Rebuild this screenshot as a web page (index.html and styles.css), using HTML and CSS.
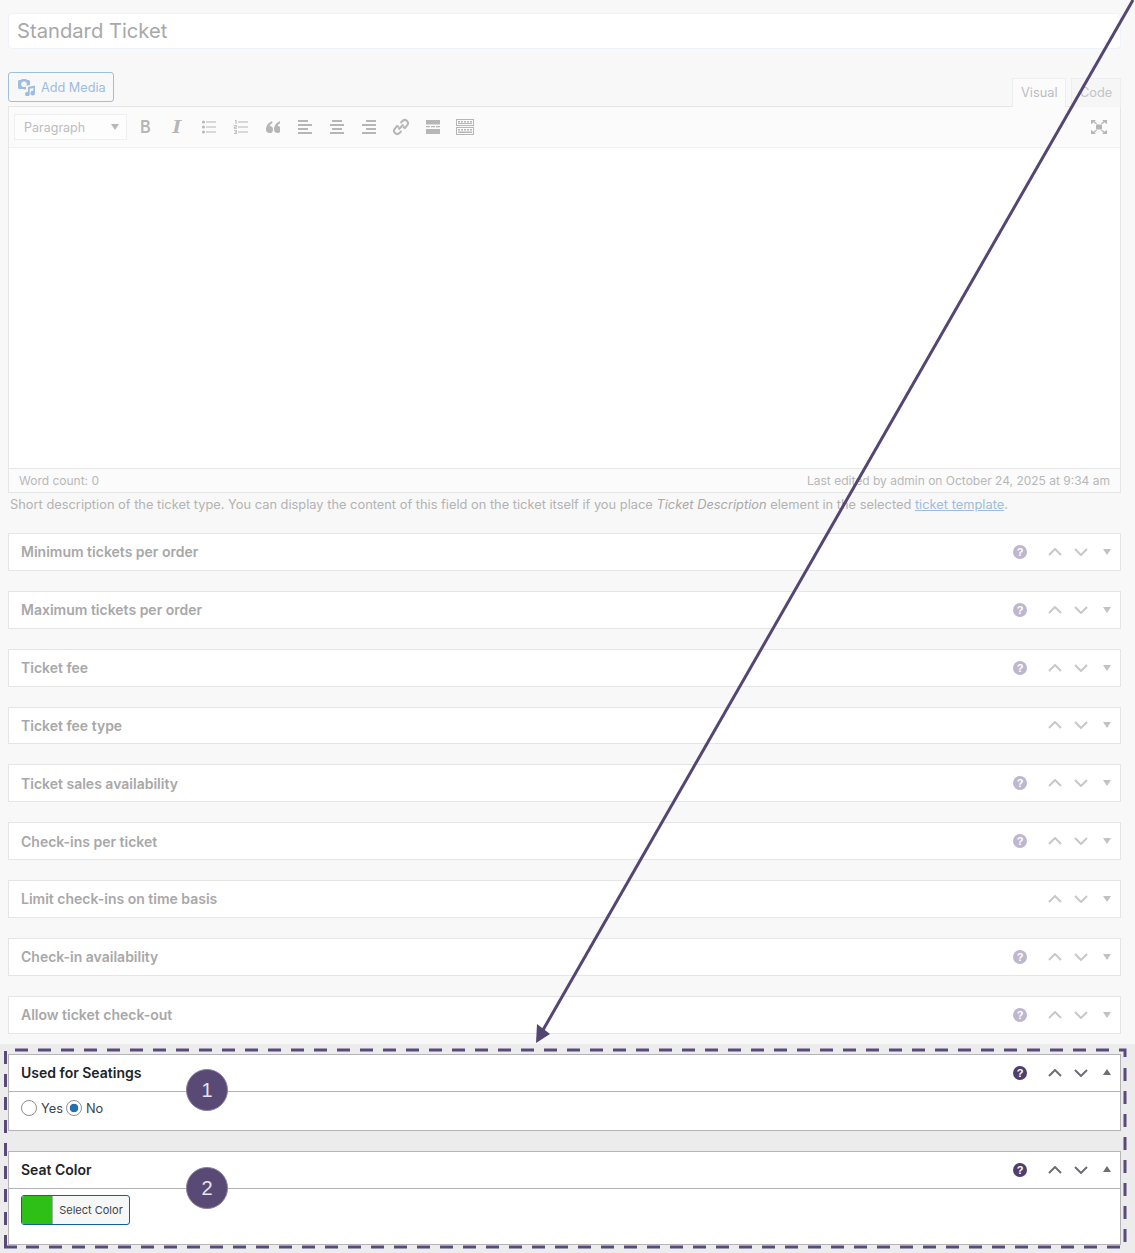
FILE: index.html
```html
<!DOCTYPE html>
<html lang="en">
<head>
<meta charset="utf-8">
<title>Standard Ticket</title>
<link rel="stylesheet" href="styles.css">
</head>
<body>
<main class="page">
  <div class="title-field">Standard Ticket</div>

  <div class="editor-head">
    <button class="add-media" type="button">
      <svg class="media-icon" width="18" height="17" viewBox="0 0 18 17"><path fill-rule="evenodd" d="M1.500 1H3l1-1h4l1 1h1.500A1.500 1.500 0 0 1 12 2.500V6L8 7v3.500H6.500L5.500 10h-4A1.500 1.500 0 0 1 0 8.500v-6A1.500 1.500 0 0 1 1.500 1zM6 2.500a2.800 2.800 0 1 0 0 5.600 2.800 2.800 0 0 0 0-5.600z"/><path d="M10 8l7-1.500v7.700a2.300 2.300 0 1 1-1.700-2.200V9l-3.600.8V15a2.300 2.300 0 1 1-1.700-2.200z"/></svg>
      Add Media
    </button>
    <div class="tabs">
      <span class="tab tab-on">Visual</span>
      <span class="tab">Code</span>
    </div>
  </div>

  <div class="editor">
    <div class="toolbar">
      <div class="format-select"><span>Paragraph</span><i class="select-caret"></i></div>
      <span class="tool"><span class="tool-b">B</span></span>
      <span class="tool"><span class="tool-i">I</span></span>
      <span class="tool"><svg width="14" height="14" viewBox="0 0 14 14"><circle cx="1.500" cy="2" r="1.500"/><circle cx="1.500" cy="7" r="1.500"/><circle cx="1.500" cy="12" r="1.500"/><path d="M4 1.500h10v1H4zM4 6.500h10v1H4zM4 11.500h10v1H4z"/></svg></span>
      <span class="tool"><svg width="14" height="14" viewBox="0 0 14 14"><path d="M1 0h1.500v4H1.500V1H1zM0 5.200h2.800v2.200H1v.6h1.800v.7H0V6.800h1.800v-.8H0zM0 10h2.800v4H0v-.7h1.800v-.9H.7v-.7h1.100V10.700H0z"/><path d="M4 1.500h10v1H4zM4 6.500h10v1H4zM4 11.500h10v1H4z"/></svg></span>
      <span class="tool"><svg width="14" height="13" viewBox="0 0 14 13"><path d="M6 0C2.500 1.500 0 4.500 0 8.500A3.500 3.500 0 1 0 3.700 5c.3-1 1.100-2 2.800-3zM14 0c-3.500 1.500-6 4.500-6 8.500A3.500 3.500 0 1 0 11.700 5c.3-1 1.100-2 2.800-3z"/></svg></span>
      <span class="tool"><svg width="14" height="14" viewBox="0 0 14 14"><path d="M0 0h10v2H0zM0 4h14v2H0zM0 8h10v2H0zM0 12h14v2H0z"/></svg></span>
      <span class="tool"><svg width="14" height="14" viewBox="0 0 14 14"><path d="M2 0h10v2H2zM0 4h14v2H0zM2 8h10v2H2zM0 12h14v2H0z"/></svg></span>
      <span class="tool"><svg width="14" height="14" viewBox="0 0 14 14"><path d="M4 0h10v2H4zM0 4h14v2H0zM4 8h10v2H4zM0 12h14v2H0z"/></svg></span>
      <span class="tool"><svg width="18" height="18" viewBox="0 0 18 18"><path class="tool-line" d="M6.500 11.500l5-5M8.500 5l2-2a3.200 3.200 0 0 1 4.500 0 3.200 3.200 0 0 1 0 4.500l-2 2.500-2-1M9.500 13l-2 2a3.200 3.200 0 0 1-4.500 0 3.200 3.200 0 0 1 0-4.500l2-2.500 2 1"/></svg></span>
      <span class="tool"><svg width="14" height="14" viewBox="0 0 14 14"><path d="M0 0h14v4.500H0zM0 9h14v5H0zM0 6h4v1.200H0zM5 6h4v1.200H5zM10 6h4v1.200h-4z"/></svg></span>
      <span class="tool"><svg width="18" height="16" viewBox="0 0 18 16"><path d="M0 0h18v7H0zm1 1v5h16V1zM0 8h18v8H0zm1 1v6h16V9z" fill-rule="evenodd"/><path d="M2 2h2v1.500H2zM5 2h2v1.500H5zM8 2h2v1.500H8zM11 2h2v1.500h-2zM14 2h2v1.500h-2zM2 4h14v1H2zM2 10h2v1.500H2zM5 10h2v1.500H5zM8 10h2v1.500H8zM11 10h2v1.500h-2zM14 10h2v1.500h-2zM2 12.500h14V14H2z"/></svg></span>
      <span class="tool tool-full"><svg width="16" height="14" viewBox="0 0 16 14"><path d="M5 4.500h6v5H5zM0 0h5L3.500 1.300 6 3.500l-1 .7-2.500-2L1 3.500 0 4zM16 0h-5l1.500 1.300L10 3.500l1 .7 2.500-2L15 3.500l1 .5zM0 14h5l-1.500-1.300L6 10.500l-1-.7-2.500 2L1 10.500 0 10zM16 14h-5l1.500-1.300L10 10.500l1-.7 2.500 2 1.500-1.300 1-.5z"/></svg></span>
    </div>
    <div class="edit-area"></div>
    <div class="status-bar">
      <span>Word count: 0</span>
      <span>Last edited by admin on October 24, 2025 at 9:34 am</span>
    </div>
  </div>

  <p class="description">Short description of the ticket type. You can display the content of this field on the ticket itself if you place <em>Ticket Description</em> element in the selected <a href="#">ticket template</a>.</p>

  <div class="box-list">
    <section class="box"><h3 class="box-title">Minimum tickets per order</h3><div class="box-actions"><span class="help">?</span><svg class="chev" viewBox="0 0 14 8"><path d="M1 7l6-6 6 6"/></svg><svg class="chev" viewBox="0 0 14 8"><path d="M1 1l6 6 6-6"/></svg><i class="tri-down"></i></div></section>
    <section class="box"><h3 class="box-title">Maximum tickets per order</h3><div class="box-actions"><span class="help">?</span><svg class="chev" viewBox="0 0 14 8"><path d="M1 7l6-6 6 6"/></svg><svg class="chev" viewBox="0 0 14 8"><path d="M1 1l6 6 6-6"/></svg><i class="tri-down"></i></div></section>
    <section class="box"><h3 class="box-title">Ticket fee</h3><div class="box-actions"><span class="help">?</span><svg class="chev" viewBox="0 0 14 8"><path d="M1 7l6-6 6 6"/></svg><svg class="chev" viewBox="0 0 14 8"><path d="M1 1l6 6 6-6"/></svg><i class="tri-down"></i></div></section>
    <section class="box"><h3 class="box-title">Ticket fee type</h3><div class="box-actions"><svg class="chev" viewBox="0 0 14 8"><path d="M1 7l6-6 6 6"/></svg><svg class="chev" viewBox="0 0 14 8"><path d="M1 1l6 6 6-6"/></svg><i class="tri-down"></i></div></section>
    <section class="box"><h3 class="box-title">Ticket sales availability</h3><div class="box-actions"><span class="help">?</span><svg class="chev" viewBox="0 0 14 8"><path d="M1 7l6-6 6 6"/></svg><svg class="chev" viewBox="0 0 14 8"><path d="M1 1l6 6 6-6"/></svg><i class="tri-down"></i></div></section>
    <section class="box"><h3 class="box-title">Check-ins per ticket</h3><div class="box-actions"><span class="help">?</span><svg class="chev" viewBox="0 0 14 8"><path d="M1 7l6-6 6 6"/></svg><svg class="chev" viewBox="0 0 14 8"><path d="M1 1l6 6 6-6"/></svg><i class="tri-down"></i></div></section>
    <section class="box"><h3 class="box-title">Limit check-ins on time basis</h3><div class="box-actions"><svg class="chev" viewBox="0 0 14 8"><path d="M1 7l6-6 6 6"/></svg><svg class="chev" viewBox="0 0 14 8"><path d="M1 1l6 6 6-6"/></svg><i class="tri-down"></i></div></section>
    <section class="box"><h3 class="box-title">Check-in availability</h3><div class="box-actions"><span class="help">?</span><svg class="chev" viewBox="0 0 14 8"><path d="M1 7l6-6 6 6"/></svg><svg class="chev" viewBox="0 0 14 8"><path d="M1 1l6 6 6-6"/></svg><i class="tri-down"></i></div></section>
    <section class="box"><h3 class="box-title">Allow ticket check-out</h3><div class="box-actions"><span class="help">?</span><svg class="chev" viewBox="0 0 14 8"><path d="M1 7l6-6 6 6"/></svg><svg class="chev" viewBox="0 0 14 8"><path d="M1 1l6 6 6-6"/></svg><i class="tri-down"></i></div></section>
  </div>

  <div class="focus-zone">
    <section class="box box-open">
      <header class="box-head"><h3 class="box-title">Used for Seatings</h3><div class="box-actions"><span class="help">?</span><svg class="chev" viewBox="0 0 14 8"><path d="M1 7l6-6 6 6"/></svg><svg class="chev" viewBox="0 0 14 8"><path d="M1 1l6 6 6-6"/></svg><i class="tri-up"></i></div></header>
      <div class="box-body radios">
        <label class="radio"><input type="radio" name="seat"> Yes</label>
        <label class="radio"><input type="radio" name="seat" checked> No</label>
      </div>
    </section>
    <section class="box box-open">
      <header class="box-head"><h3 class="box-title">Seat Color</h3><div class="box-actions"><span class="help">?</span><svg class="chev" viewBox="0 0 14 8"><path d="M1 7l6-6 6 6"/></svg><svg class="chev" viewBox="0 0 14 8"><path d="M1 1l6 6 6-6"/></svg><i class="tri-up"></i></div></header>
      <div class="box-body color-body">
        <button class="color-btn" type="button"><span class="swatch"></span><span class="color-label">Select Color</span></button>
      </div>
    </section>
  </div>
</main>

<svg class="annotations" width="1135" height="1253" viewBox="0 0 1135 1253">
  <path class="dash" d="M15 1050H1119M1119 1050H1126.500M1125 1050V1057M1125 1068V1242M1120 1247H17M17 1247H4M5.500 1247V1235M5.500 1051V1235"/>
  <path class="arrow-line" d="M1133 0L543 1030"/>
  <path class="arrow-head" d="M536 1043L537 1024 550 1034z"/>
</svg>
<span class="badge badge-one">1</span>
<span class="badge badge-two">2</span>
</body>
</html>
```

FILE: styles.css
```css
* { box-sizing: border-box; }
html, body { margin: 0; height: 1253px; overflow: hidden; }
body {
  position: relative;
  background: #f8f8f8;
  font-family: Inter, "Liberation Sans", sans-serif;
  color: #a9a9a9;
}
.page { padding: 13px 14px 0 8px; }

.title-field {
  height: 36px;
  background: #fff;
  border: 1px solid #eff2f8;
  border-radius: 4px;
  padding: 0 8px;
  font-size: 20.200px;
  line-height: 34px;
  color: #a8a8a8;
}

.editor-head {
  display: flex;
  justify-content: space-between;
  align-items: flex-end;
  height: 34px;
  margin-top: 23px;
  position: relative;
}
.add-media {
  align-self: flex-start;
  display: flex;
  align-items: center;
  gap: 5px;
  height: 30px;
  width: 106px;
  padding: 0 0 0 9px;
  border: 1px solid #9dbfe0;
  border-radius: 3px;
  background: #f8f8f8;
  color: #9dbde0;
  font: 12.700px Inter, sans-serif;
}
.media-icon { fill: #9dbde0; flex: none; }
.tabs { display: flex; gap: 5px; margin-bottom: -1px; }
.tab {
  display: block;
  height: 29px;
  padding: 0 8px;
  border: 1px solid #eeeeee;
  border-bottom: 0;
  background: #f6f6f6;
  font-size: 12.800px;
  line-height: 27px;
  color: #c4c4c4;
  width: 50px;
}
.tab-on { background: #fbfbfb; width: 54px; color: #bcbcc4; }

.editor { border: 1px solid #e6e6e6; background: #fff; }
.toolbar {
  display: flex;
  align-items: center;
  height: 41px;
  padding-left: 5px;
  background: #fbfbfb;
  border-bottom: 1px solid #f0f0f0;
}
.format-select {
  display: flex;
  justify-content: space-between;
  align-items: center;
  width: 113px;
  height: 26px;
  margin-right: 2px;
  padding: 0 7px 0 9px;
  background: #fdfdfd;
  border: 1px solid #efefef;
  font-size: 12.500px;
  color: #bcbcbc;
}
.select-caret {
  width: 0; height: 0;
  border-left: 4px solid transparent;
  border-right: 4px solid transparent;
  border-top: 6px solid #b8b8b8;
}
.tool {
  display: flex;
  align-items: center;
  justify-content: center;
  width: 32px;
  height: 26px;
}
.tool svg { fill: #b6b6b6; }
.tool-line { fill: none; stroke: #b6b6b6; stroke-width: 2; }
.tool-b {
  display: block;
  font: bold 18px "Liberation Sans", sans-serif;
  color: #b6b6b6;
  transform: scaleX(.8);
}
.tool-i {
  display: block;
  font: italic bold 19px "Liberation Serif", serif;
  color: #b6b6b6;
  transform: scaleX(1.25);
}
.tool-full { margin-left: auto; margin-right: 5px; }
.edit-area { height: 320px; background: #fff; }
.status-bar {
  display: flex;
  justify-content: space-between;
  align-items: center;
  height: 24px;
  padding: 0 10px;
  background: #fbfbfb;
  border-top: 1px solid #e6e6e6;
  font-size: 12px;
  color: #b8b8b8;
}

.description {
  margin: 3px 0 0 2px;
  height: 18px;
  font-size: 12.850px;
  line-height: 18px;
  color: #b3b3b3;
  white-space: nowrap;
}
.description em { color: #a9a9a9; }
.description a { color: #9dbde0; }

.box-list {
  display: flex;
  flex-direction: column;
  gap: 20px;
  margin-top: 19px;
}
.box {
  display: flex;
  justify-content: space-between;
  align-items: center;
  height: 37.850px;
  padding: 0 9px 0 12px;
  background: #fff;
  border: 1px solid #e5e5e5;
}
.box-title {
  margin: 0;
  font-size: 14px;
  font-weight: 600;
  color: #a8a8a8;
}
.box-actions { display: flex; align-items: center; }
.help {
  display: block;
  width: 14px;
  height: 14px;
  margin-right: 21px;
  border-radius: 50%;
  background: #bdb8cf;
  color: #fff;
  font: bold 11px/14px "Liberation Sans", sans-serif;
  text-align: center;
}
.chev {
  display: block;
  width: 14px;
  height: 8px;
  margin-right: 12px;
  fill: none;
  stroke: #c8c8c8;
  stroke-width: 2;
}
.tri-down, .tri-up {
  width: 0; height: 0;
  margin-left: 3px;
  border-left: 4px solid transparent;
  border-right: 4px solid transparent;
}
.tri-down { border-top: 6px solid #c2c2c2; }
.tri-up { margin-top: -2px; border-bottom: 6px solid #6c6f74; }

.focus-zone {
  display: flex;
  flex-direction: column;
  gap: 20px;
  height: 215px;
  margin: 10px -14px 0 -8px;
  padding: 10px 14px 0 8px;
  background: #ececec;
}
.box-open {
  display: block;
  height: auto;
  padding: 0;
  border-color: #b4b4b7;
}
.box-open .box-title { color: #1d2327; }
.box-open .help { background: #4e3f6e; }
.box-open .chev { stroke: #6c6f74; }
.box-head {
  display: flex;
  justify-content: space-between;
  align-items: center;
  height: 37px;
  padding: 0 9px 0 12px;
  border-bottom: 1px solid #b4b4b7;
}
.radios {
  display: flex;
  align-items: center;
  gap: 3px;
  height: 38px;
  padding: 0 0 4px 12px;
}
.radio {
  display: flex;
  align-items: center;
  gap: 4px;
  font-size: 12.800px;
  color: #3c434a;
}
.radio input {
  appearance: none;
  width: 16px;
  height: 16px;
  margin: 0 0 2px;
  border: 1px solid #8c8f94;
  border-radius: 50%;
  background: #fff;
}
.radio input:checked {
  background: radial-gradient(circle, #2271b1 0 4px, #fff 4.600px);
}
.color-body { height: 55px; padding: 6px 0 0 12px; }
.color-btn {
  display: flex;
  width: 109px;
  height: 30px;
  padding: 0;
  border: 1px solid #135e96;
  border-radius: 3px;
  background: #f6f7f7;
  overflow: hidden;
}
.swatch { width: 31px; background: #2fc018; border-right: 1px solid #a9b0a9; }
.color-label {
  flex: 1;
  font: 11px/28px Inter, sans-serif;
  color: #3c434a;
  text-align: center;
}

.annotations { position: absolute; left: 0; top: 0; pointer-events: none; }
.dash { fill: none; stroke: #5a4a7a; stroke-width: 3; stroke-dasharray: 13 10; }
.arrow-line { fill: none; stroke: #544673; stroke-width: 3; }
.arrow-head { fill: #544673; }
.badge {
  position: absolute;
  left: 186px;
  width: 42px;
  height: 42px;
  border-radius: 50%;
  background: #584a75;
  border: 1px solid #8a7fa0;
  color: #e6e4ec;
  font: 20px/40px "Liberation Sans", sans-serif;
  text-align: center;
}
.badge-one { top: 1069px; }
.badge-two { top: 1167px; }
```
